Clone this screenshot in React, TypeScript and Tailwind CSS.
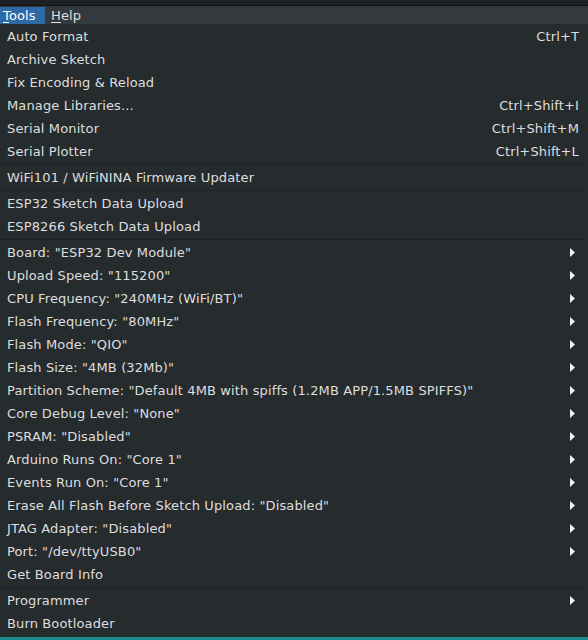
import React from "react";

type Item = { label: string; shortcut?: string; sub?: boolean };

const groups: Item[][] = [
  [
    { label: "Auto Format", shortcut: "Ctrl+T" },
    { label: "Archive Sketch" },
    { label: "Fix Encoding & Reload" },
    { label: "Manage Libraries...", shortcut: "Ctrl+Shift+I" },
    { label: "Serial Monitor", shortcut: "Ctrl+Shift+M" },
    { label: "Serial Plotter", shortcut: "Ctrl+Shift+L" },
  ],
  [{ label: "WiFi101 / WiFiNINA Firmware Updater" }],
  [{ label: "ESP32 Sketch Data Upload" }, { label: "ESP8266 Sketch Data Upload" }],
  [
    { label: 'Board: "ESP32 Dev Module"', sub: true },
    { label: 'Upload Speed: "115200"', sub: true },
    { label: 'CPU Frequency: "240MHz (WiFi/BT)"', sub: true },
    { label: 'Flash Frequency: "80MHz"', sub: true },
    { label: 'Flash Mode: "QIO"', sub: true },
    { label: 'Flash Size: "4MB (32Mb)"', sub: true },
    { label: 'Partition Scheme: "Default 4MB with spiffs (1.2MB APP/1.5MB SPIFFS)"', sub: true },
    { label: 'Core Debug Level: "None"', sub: true },
    { label: 'PSRAM: "Disabled"', sub: true },
    { label: 'Arduino Runs On: "Core 1"', sub: true },
    { label: 'Events Run On: "Core 1"', sub: true },
    { label: 'Erase All Flash Before Sketch Upload: "Disabled"', sub: true },
    { label: 'JTAG Adapter: "Disabled"', sub: true },
    { label: 'Port: "/dev/ttyUSB0"', sub: true },
    { label: "Get Board Info" },
  ],
  [{ label: "Programmer", sub: true }, { label: "Burn Bootloader" }],
];

function Arrow() {
  return (
    <svg width="5" height="9" viewBox="0 0 5 9" className="block">
      <path d="M0 0 L5 4.5 L0 9 Z" fill="#f2f2f2" />
    </svg>
  );
}

function Row({ item }: { item: Item }) {
  return (
    <div className="h-[23px] flex items-center pl-[7px] pr-[9px]">
      <span className="flex-1 whitespace-nowrap">{item.label}</span>
      {item.shortcut && <span className="whitespace-nowrap">{item.shortcut}</span>}
      {item.sub && (
        <span className="pr-[4px]">
          <Arrow />
        </span>
      )}
    </div>
  );
}

export default function App() {
  return (
    <div
      className="w-[588px] h-[640px] flex flex-col bg-[#262b2e] text-[#dedede] text-[13px] tracking-[0.13px] overflow-hidden"
      style={{ fontFamily: '"DejaVu Sans", sans-serif' }}
    >
      <div className="h-[5px] bg-[#1e2123] shrink-0" />
      <div className="h-[1px] bg-[#101213] shrink-0" />
      <div className="h-[18px] bg-[#33393c] flex items-end shrink-0">
        <div className="h-[17px] w-[45px] bg-[#2e6aa8] flex items-center pl-[3px] text-white">
          <span>
            <span className="underline underline-offset-2">T</span>ools
          </span>
        </div>
        <div className="h-[17px] flex items-center pl-[6px]">
          <span>
            <span className="underline underline-offset-2">H</span>elp
          </span>
        </div>
      </div>
      <div className="flex-1 flex flex-col pt-[1px]">
        {groups.map((g, gi) => (
          <React.Fragment key={gi}>
            {gi > 0 && (
              <div className="h-[3px] flex items-center pr-[3px]">
                <div className="h-[1px] w-full bg-[#1f2326]" />
              </div>
            )}
            {g.map((it, ii) => (
              <Row key={ii} item={it} />
            ))}
          </React.Fragment>
        ))}
      </div>
      <div className="h-[3px] bg-[#1b8a8a] shrink-0" />
    </div>
  );
}
